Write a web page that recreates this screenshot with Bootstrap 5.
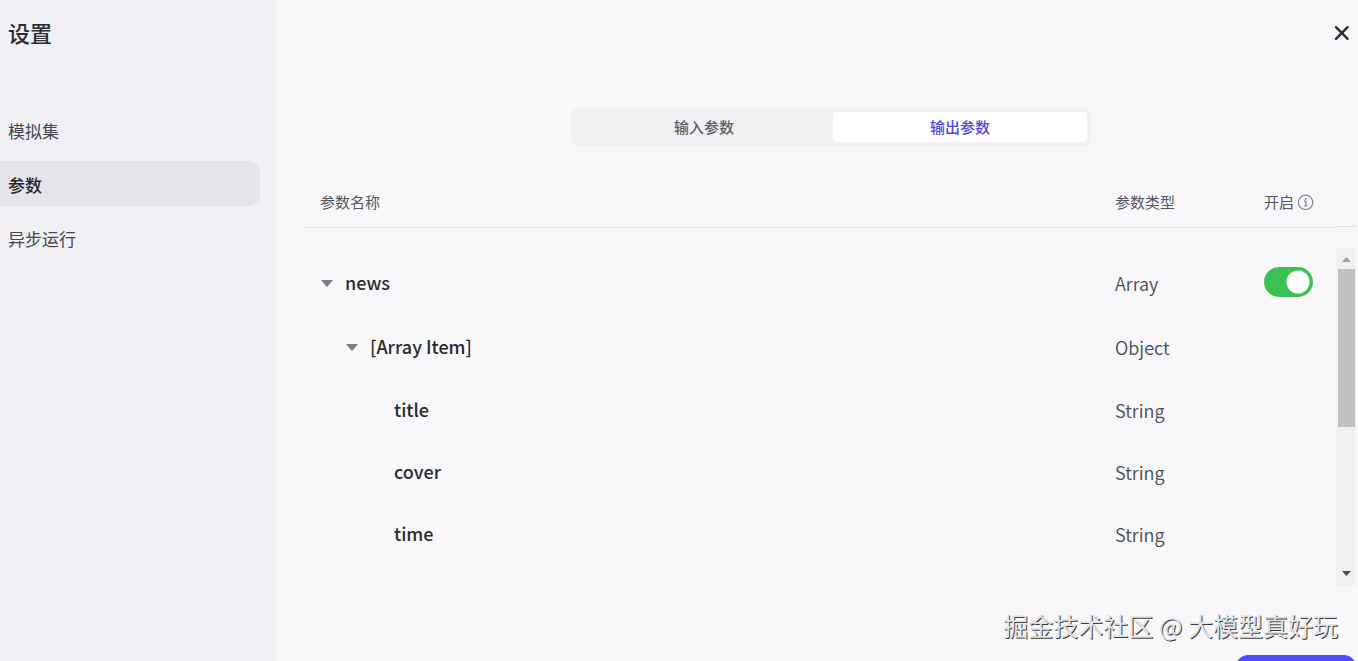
<!DOCTYPE html>
<html lang="zh-CN">
<head>
<meta charset="utf-8">
<meta name="viewport" content="width=device-width, initial-scale=1">
<title>设置</title>
<link href="https://cdn.jsdelivr.net/npm/bootstrap@5.3.0/dist/css/bootstrap.min.css" rel="stylesheet">
<style>
  body { font-family: "Noto Sans CJK SC", sans-serif; background: #f8f8fb; color: #1f2024; }
  .side { width: 276px; background: #f0f0f5; padding-right: 16px; }
  .side-title { font-size: 22px; line-height: 32px; font-weight: 500; color: #2b2c33; margin: 16px 0 59px; padding-left: 8px; }
  .side .nav { gap: 9px; }
  .side .nav-link { font-size: 17px; line-height: 25px; padding: 11px 8px 9px; color: #45464e; border-radius: 0 12px 12px 0; }
  .side .nav-link.active { background: #e4e4e9; color: #25262c; font-weight: 500; }
  .main { padding: 0 2px 0 30px; }
  .close-btn { border: 0; background: none; padding: 0; width: 28px; height: 28px; margin: 18px 0 62px; }
  .seg { width: 520px; height: 38px; padding: 4px; background: #f1f1f4; border-radius: 8px; }
  .seg-btn { border: 0; background: none; border-radius: 4px; font-size: 15px; line-height: 22px; font-weight: 500; color: #5c5d64; padding: 4px; }
  .seg-btn.active { background: #fff; color: #4f48dc; flex: 0 0 254px; }
  .params { margin-top: 31px; }
  .params th, .params td { padding: 0; font-weight: 400; }
  .params thead th { height: 50px; font-size: 15px; line-height: 22px; color: #55565d; border-bottom: 1px solid #e6e6ea; }
  .params thead th:first-child { padding-left: 14px; }
  .params .col-type { width: 149px; }
  .params .col-on { width: 72px; }
  .params tbody tr { height: 62px; }
  .params tbody tr.branch { height: 64px; }
  .params tbody th { font-size: 18px; line-height: 26px; font-weight: 500; color: #2a2b30; }
  .params tbody td { font-size: 18px; line-height: 26px; font-weight: 350; color: #4a4b51; }
  .params tbody td.type { padding-top: 2px; }
  .params tbody tr.gap-row { height: 23px; }
  .params th.lv0 { padding-left: 15px; }
  .params th.lv1 { padding-left: 40px; }
  .params th.lv2 { padding-left: 88px; }
  .fold { border: 0; background: none; padding: 2px 0 0; width: 12px; height: 26px; margin-right: 12px; }
  .form-switch.toggle { padding: 0; margin: 0; min-height: 0; line-height: 0; }
  .toggle .form-check-input { width: 49px; height: 30px; margin: 0; float: none; border: 0; box-shadow: none;
    background-size: 30px 30px; }
  .toggle .form-check-input:checked { background-color: #3bc151;
    background-image: url("data:image/svg+xml,%3Csvg xmlns='http://www.w3.org/2000/svg' viewBox='0 0 30 30'%3E%3Ccircle cx='15' cy='15' r='11.5' fill='%23fff'/%3E%3C/svg%3E"); }
  .rail { width: 20px; margin-top: 31px; }
  .rail-head { height: 50px; border-bottom: 1px solid #dedee1; margin-bottom: 21px; }
  .bar { height: 338px; background: #f1f1f2; padding: 0 1px 3px 2px; }
  .bar-end { height: 21px; padding-top: 1px; }
  .bar-thumb { height: 158px; background: #c1c1c2; }
  .save { width: 120px; height: 40px; background: #5147ff; border: 0; border-radius: 12px; color: #fff; margin-top: 69px; }
  .watermark { right: 20px; bottom: 17px; font-size: 25px; line-height: 38px; color: #e4e4e4; text-shadow: 1px 1px 0 #3c3c3c; white-space: nowrap; }
</style>
</head>
<body>
<div class="d-flex vh-100 overflow-hidden position-relative">
  <aside class="side flex-shrink-0">
    <h1 class="side-title">设置</h1>
    <nav class="nav flex-column">
      <a class="nav-link" href="#">模拟集</a>
      <a class="nav-link active" href="#" aria-current="page">参数</a>
      <a class="nav-link" href="#">异步运行</a>
    </nav>
  </aside>
  <main class="main flex-grow-1 d-flex flex-column">
    <button class="close-btn align-self-end" type="button" aria-label="关闭">
      <svg width="28" height="28" viewBox="0 0 28 28" fill="none" stroke="#2b2c33" stroke-width="2.4" stroke-linecap="round"><path d="M8 8.2 19.6 19.8M19.6 8.2 8 19.8"/></svg>
    </button>
    <div class="seg d-flex align-self-center" role="tablist">
      <button class="seg-btn flex-grow-1" type="button" role="tab" aria-selected="false">输入参数</button>
      <button class="seg-btn active" type="button" role="tab" aria-selected="true">输出参数</button>
    </div>
    <div class="d-flex">
      <div class="flex-grow-1">
        <table class="params w-100 align-middle">
          <thead>
            <tr>
              <th scope="col">参数名称</th>
              <th scope="col" class="col-type">参数类型</th>
              <th scope="col" class="col-on"><span class="d-flex align-items-center">开启<svg class="ms-1" width="16" height="16" viewBox="0 0 16 16" fill="none" stroke="#85868c" stroke-width="1.2"><circle cx="7.6" cy="8.4" r="7.2"/><path d="M6 7.2H7.8V12M5.8 12H9.6"/><circle cx="7.6" cy="5" r=".9" fill="#85868c" stroke="none"/></svg></span></th>
            </tr>
          </thead>
          <tbody>
            <tr class="gap-row" aria-hidden="true"><td colspan="3"></td></tr>
            <tr class="branch">
              <th scope="row" class="lv0"><span class="d-flex align-items-center"><button class="fold d-flex align-items-center" type="button" aria-label="收起 news"><svg width="12" height="8" viewBox="0 0 12 8"><path d="M0 1H12L6.8 7.3Q6 8 5.2 7.3Z" fill="#7d7e83"/></svg></button>news</span></th>
              <td class="type">Array</td>
              <td><div class="form-check form-switch toggle"><input class="form-check-input" type="checkbox" role="switch" aria-label="开启 news" checked></div></td>
            </tr>
            <tr class="branch">
              <th scope="row" class="lv1"><span class="d-flex align-items-center"><button class="fold d-flex align-items-center" type="button" aria-label="收起 Array Item"><svg width="12" height="8" viewBox="0 0 12 8"><path d="M0 1H12L6.8 7.3Q6 8 5.2 7.3Z" fill="#7d7e83"/></svg></button>[Array Item]</span></th>
              <td class="type">Object</td><td></td>
            </tr>
            <tr><th scope="row" class="lv2">title</th><td class="type">String</td><td></td></tr>
            <tr><th scope="row" class="lv2">cover</th><td class="type">String</td><td></td></tr>
            <tr><th scope="row" class="lv2">time</th><td class="type">String</td><td></td></tr>
          </tbody>
        </table>
      </div>
      <div class="rail flex-shrink-0" aria-hidden="true">
        <div class="rail-head"></div>
        <div class="bar d-flex flex-column justify-content-between">
          <div>
            <div class="bar-end d-flex align-items-center justify-content-center"><svg width="9" height="5" viewBox="0 0 9 5"><path d="M0 5 4.5 0 9 5Z" fill="#a0a0a2"/></svg></div>
            <div class="bar-thumb"></div>
          </div>
          <div class="bar-end d-flex align-items-center justify-content-center"><svg width="9" height="5" viewBox="0 0 9 5"><path d="M0 0H9L4.5 5Z" fill="#4c4c4e"/></svg></div>
        </div>
      </div>
    </div>
    <button class="save flex-shrink-0 align-self-end" type="button" aria-label="保存"></button>
  </main>
  <div class="watermark position-absolute">掘金技术社区 @ 大模型真好玩</div>
</div>
<script src="https://cdn.jsdelivr.net/npm/bootstrap@5.3.0/dist/js/bootstrap.bundle.min.js"></script>
</body>
</html>
